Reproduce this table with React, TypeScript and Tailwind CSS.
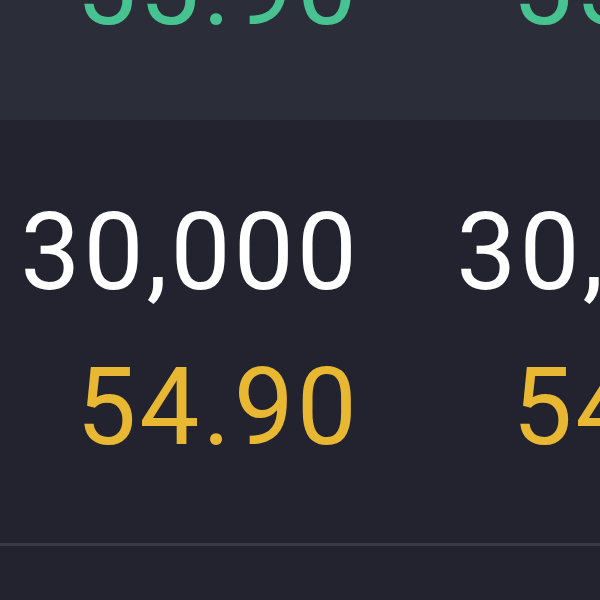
export default function App() {
  const num = "text-[107px] leading-none tracking-[3px] text-right whitespace-nowrap";
  return (
    <div
      className="w-[600px] h-[600px] overflow-hidden bg-[#22232e] flex flex-col"
      style={{ fontFamily: "Roboto, 'Liberation Sans', sans-serif" }}
    >
      <div className="h-[120px] shrink-0 bg-[#2b2e38] overflow-hidden">
        <div className="grid grid-cols-[360px_436px] mt-[-66px]">
          <div className={`${num} text-[#47c391]`}>55.90</div>
          <div className={`${num} text-[#47c391]`}>55.90</div>
        </div>
      </div>
      <div className="grid grid-cols-[360px_436px] mt-[79px]">
        <div className={`${num} text-white`}>30,000</div>
        <div className={`${num} text-white`}>30,000</div>
      </div>
      <div className="grid grid-cols-[360px_436px] mt-[48px]">
        <div className={`${num} text-[#e9b832]`}>54.90</div>
        <div className={`${num} text-[#e9b832]`}>54.90</div>
      </div>
      <div className="mt-[82px] h-[3px] bg-[#393a48] shrink-0" />
    </div>
  );
}
